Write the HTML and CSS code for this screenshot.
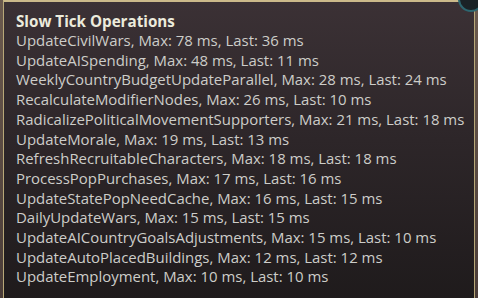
FILE: index.html
```html
<!DOCTYPE html>
<html lang="en">
<head>
    <meta charset="UTF-8" />
    <link rel="stylesheet" href="styles.css">
</head>
<body>
    <div class="backdrop">
        <div class="orb"></div>
        <div class="tooltip">
            <div class="tooltip-title">Slow Tick Operations</div>
            <ul class="op-list">
                <li>UpdateCivilWars, Max: 78 ms, Last: 36 ms</li>
                <li>UpdateAISpending, Max: 48 ms, Last: 11 ms</li>
                <li>WeeklyCountryBudgetUpdateParallel, Max: 28 ms, Last: 24 ms</li>
                <li>RecalculateModifierNodes, Max: 26 ms, Last: 10 ms</li>
                <li>RadicalizePoliticalMovementSupporters, Max: 21 ms, Last: 18 ms</li>
                <li>UpdateMorale, Max: 19 ms, Last: 13 ms</li>
                <li>RefreshRecruitableCharacters, Max: 18 ms, Last: 18 ms</li>
                <li>ProcessPopPurchases, Max: 17 ms, Last: 16 ms</li>
                <li>UpdateStatePopNeedCache, Max: 16 ms, Last: 15 ms</li>
                <li>DailyUpdateWars, Max: 15 ms, Last: 15 ms</li>
                <li>UpdateAICountryGoalsAdjustments, Max: 15 ms, Last: 10 ms</li>
                <li>UpdateAutoPlacedBuildings, Max: 12 ms, Last: 12 ms</li>
                <li>UpdateEmployment, Max: 10 ms, Last: 10 ms</li>
            </ul>
        </div>
    </div>
</body>
</html>
```

FILE: styles.css
```css
* {
    box-sizing: border-box;
    margin: 0;
    padding: 0;
}

body {
    font-family: 'Open Sans', 'Noto Sans', sans-serif;
    background-color: #5a4a44;
    width: 478px;
    height: 298px;
    overflow: hidden;
}

.backdrop {
    position: relative;
    height: 298px;
    padding: 0 3px 0 3px;
    background: linear-gradient(180deg, #6b5a4e 0%, #4a3c38 100%);
}

.orb {
    position: absolute;
    top: -14px;
    right: -6px;
    width: 26px;
    height: 26px;
    border-radius: 50%;
    background: #1a2226;
    border: 2px solid #2c6670;
    z-index: 2;
}

.tooltip {
    height: 310px;
    border: 1px solid #b8a878;
    border-top: 2px solid #cbb98a;
    background: linear-gradient(180deg, #3b3135 0%, #2d2629 45%, #1e1a1b 100%);
    padding: 9px 6px 0 12px;
    color: #cdcdc9;
    white-space: nowrap;
}

.tooltip-title {
    font-weight: 700;
    font-size: 15.2px;
    line-height: 20px;
    color: #ecebdc;
}

.op-list {
    list-style: none;
    font-size: 14.95px;
    line-height: 19.7px;
}
```
